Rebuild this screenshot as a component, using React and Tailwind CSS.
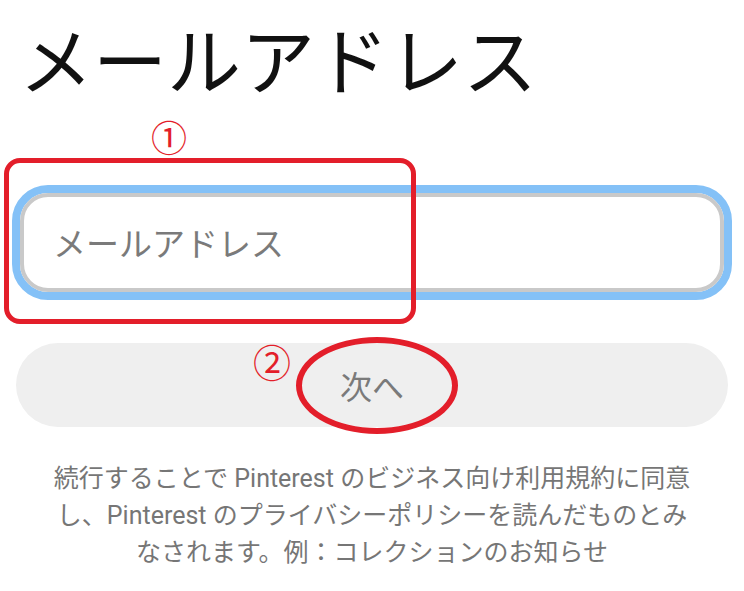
import React from 'react';

export default function App() {
  return (
    <div className="relative w-[744px] h-[591px] overflow-hidden bg-white font-['Roboto','Noto_Sans_CJK_JP',sans-serif]">
      {/* タイトル */}
      <h1 className="pl-[19px] pt-[20px] text-[74px] leading-[74px] font-normal text-[#111111] font-['Noto_Sans_CJK_JP',sans-serif]">
        メールアドレス
      </h1>

      {/* 入力欄 */}
      <div className="mt-[91px] mx-[12px] h-[115px] rounded-[36px] border-[8px] border-[#84c1f7]">
        <div className="h-full rounded-[28px] border-[4px] border-[#c9c9c9] flex items-center pl-[29px]">
          <span className="text-[33px] leading-none text-[#7a7a7a] font-['Noto_Sans_CJK_JP',sans-serif]">
            メールアドレス
          </span>
        </div>
      </div>

      {/* 次へボタン */}
      <div className="mt-[43px] mx-[16px] h-[84px] rounded-full bg-[#efefef] flex items-center justify-center">
        <span className="text-[32px] leading-none text-[#7a7a7a] font-['Noto_Sans_CJK_JP',sans-serif]">次へ</span>
      </div>

      {/* 注意書き */}
      <p className="mt-[33px] text-center text-[25px] leading-[37px] text-[#767676]">
        続行することで Pinterest のビジネス向け利用規約に同意
        <br />
        し、Pinterest のプライバシーポリシーを読んだものとみ
        <br />
        なされます。例：コレクションのお知らせ
      </p>

      {/* 赤い注釈 */}
      <div className="absolute left-[4px] top-[158px] w-[412px] h-[166px] rounded-[16px] border-[5px] border-[#e31e2a]" />
      <span className="absolute left-[151px] top-[116px] text-[36px] leading-[40px] text-[#e31e2a] font-['Noto_Sans_CJK_JP',sans-serif]">
        ①
      </span>
      <div className="absolute left-[296px] top-[337px] w-[162px] h-[97px] rounded-[50%] border-[6px] border-[#e31e2a]" />
      <span className="absolute left-[253px] top-[340px] text-[38px] leading-[42px] text-[#e31e2a] font-['Noto_Sans_CJK_JP',sans-serif]">
        ②
      </span>
    </div>
  );
}
